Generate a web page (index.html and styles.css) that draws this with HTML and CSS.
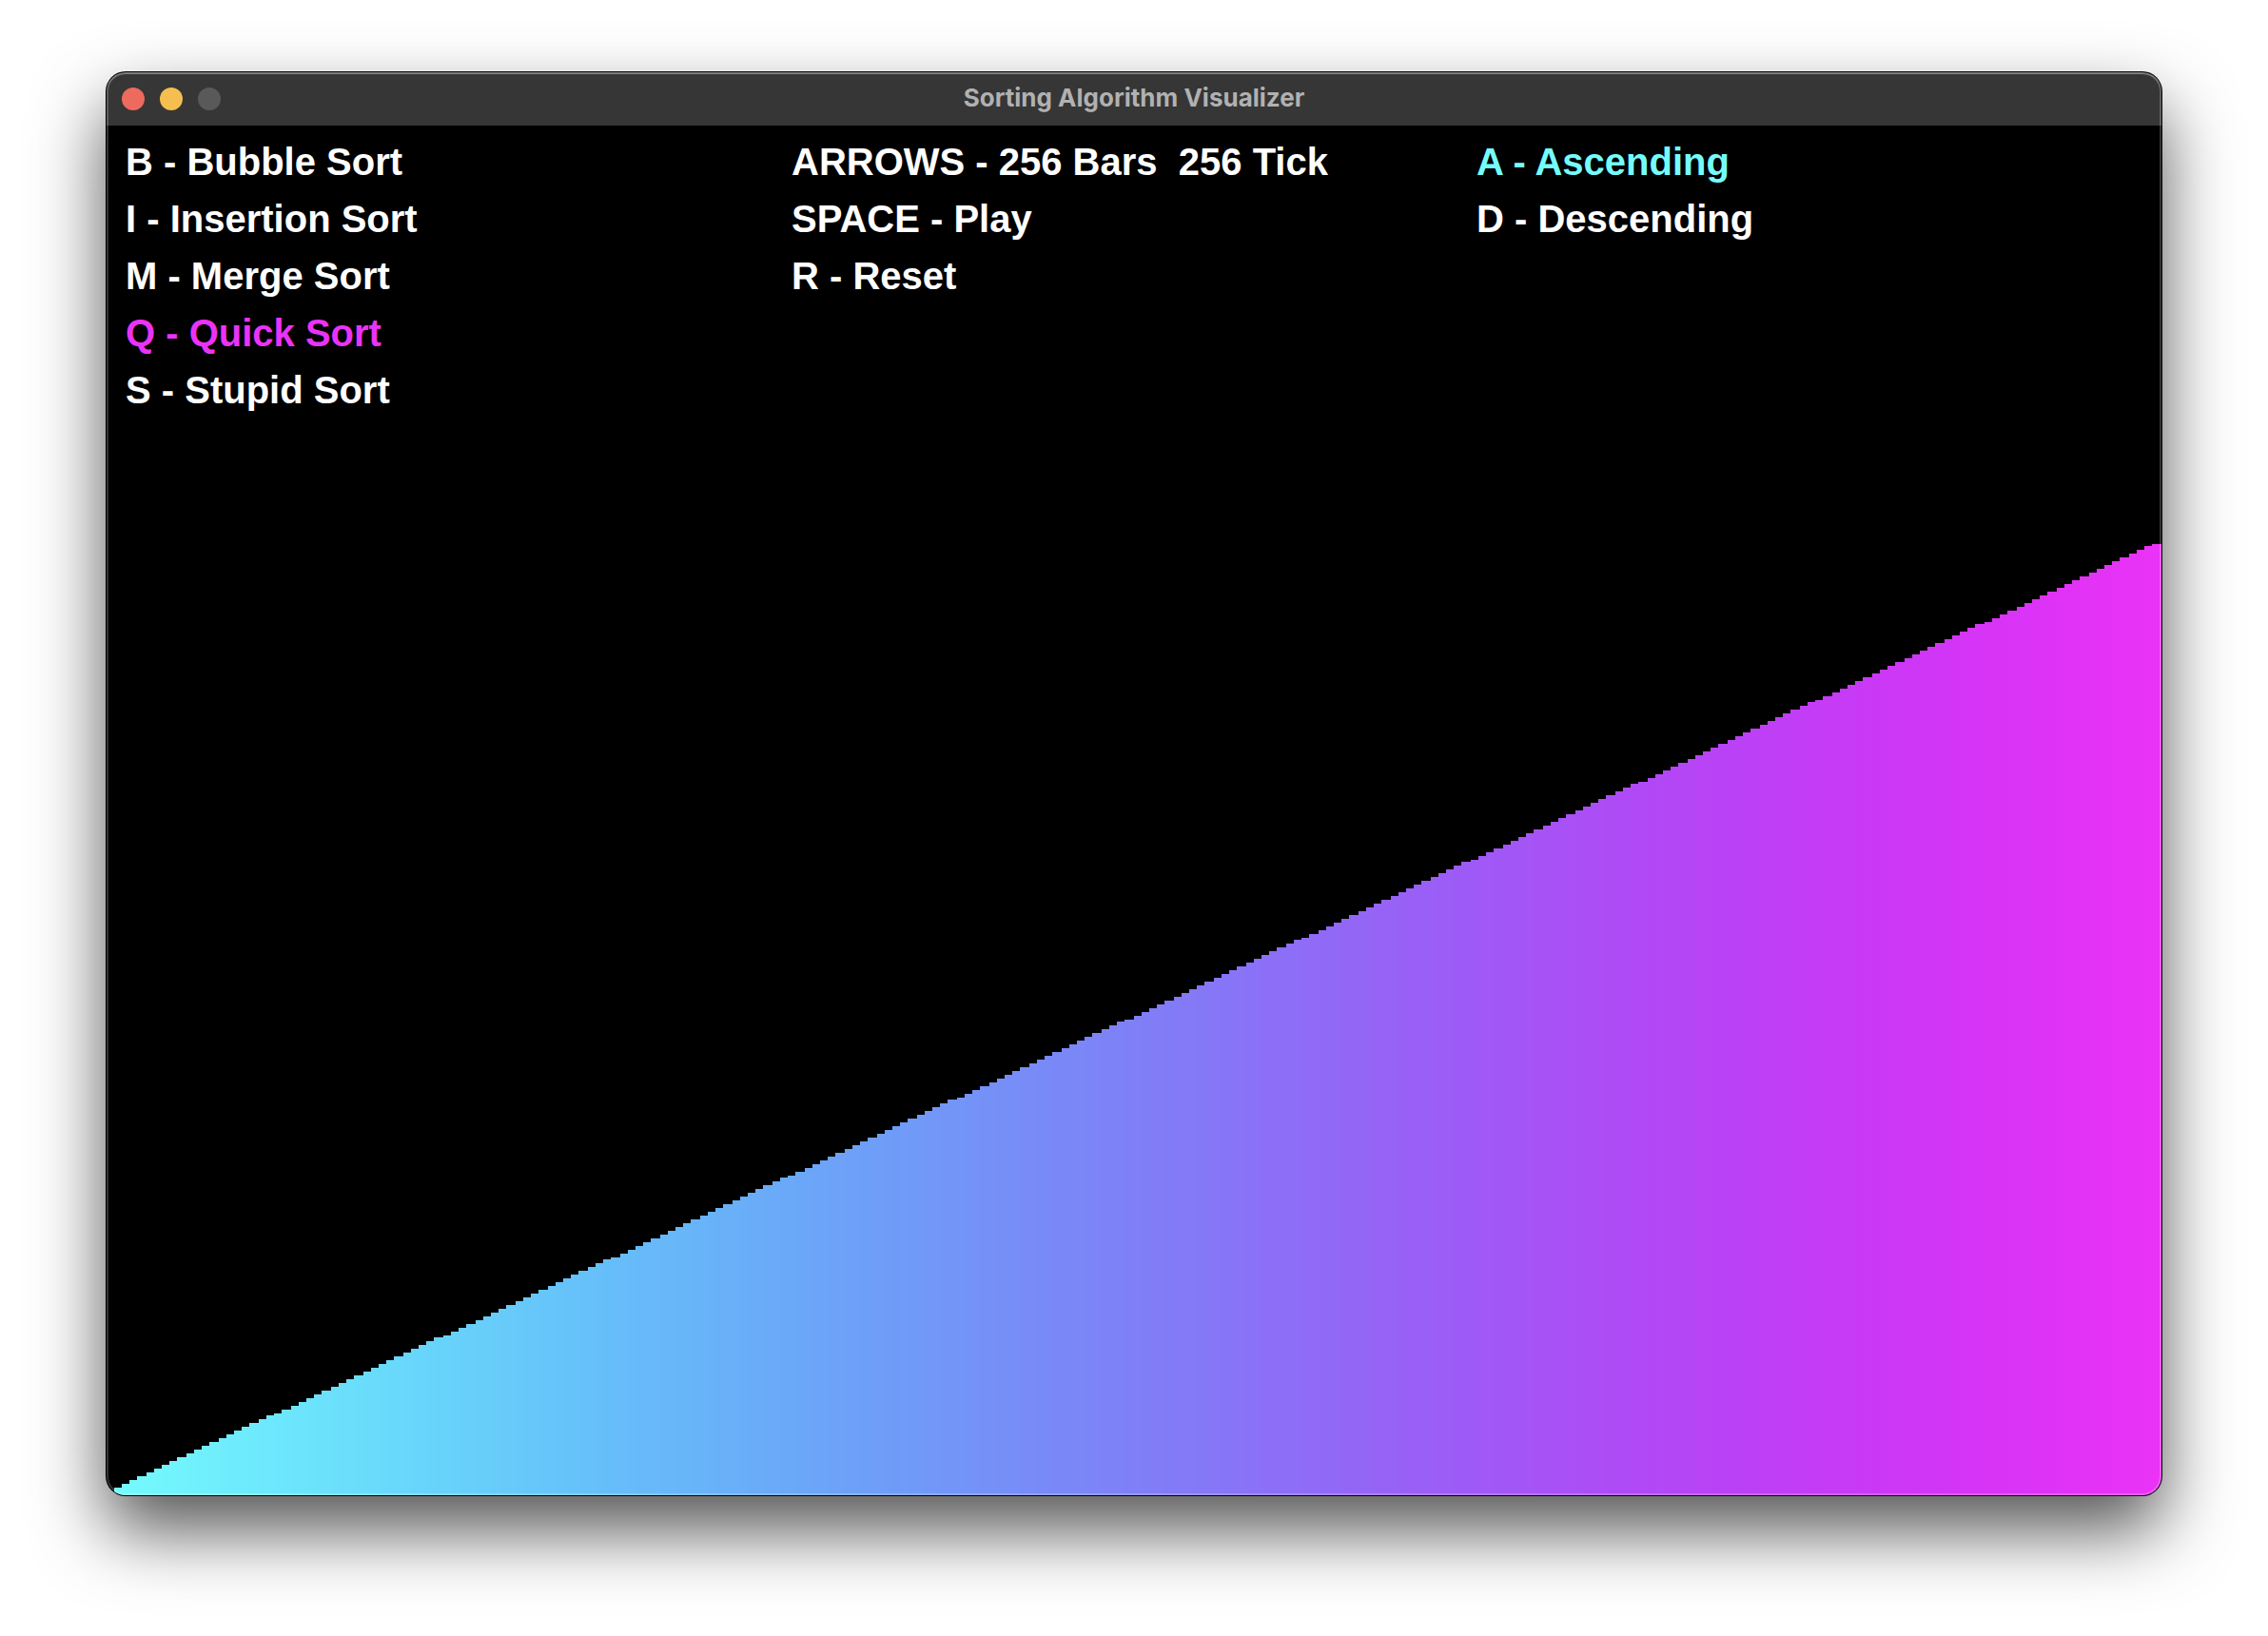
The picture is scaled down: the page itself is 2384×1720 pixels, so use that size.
FILE: index.html
```html
<!DOCTYPE html>
<html lang="en">
<head>
<meta charset="utf-8">
<meta name="viewport" content="width=device-width, initial-scale=1">
<title>Sorting Algorithm Visualizer</title>
<link rel="stylesheet" href="styles.css">
</head>
<body>
<main class="window">
  <header class="titlebar">
    <div class="lights">
      <button class="light light-close" type="button" aria-label="Close"></button>
      <button class="light light-minimize" type="button" aria-label="Minimize"></button>
      <button class="light light-zoom" type="button" aria-label="Zoom" disabled></button>
    </div>
    <h1 class="title">Sorting Algorithm Visualizer</h1>
  </header>
  <section class="stage">
    <div class="keys">
      <ul class="key-list key-list-first">
        <li>B - Bubble Sort</li>
        <li>I - Insertion Sort</li>
        <li>M - Merge Sort</li>
        <li class="algorithm-active">Q - Quick Sort</li>
        <li>S - Stupid Sort</li>
      </ul>
      <ul class="key-list">
        <li>ARROWS - 256 Bars&nbsp; 256 Tick</li>
        <li>SPACE - Play</li>
        <li>R - Reset</li>
      </ul>
      <ul class="key-list">
        <li class="order-active">A - Ascending</li>
        <li>D - Descending</li>
      </ul>
    </div>
    <svg class="bars" id="bars" viewBox="0 0 1080 500" role="img" aria-label="256 sorted bars"></svg>
  </section>
</main>
<script src="bars.js"></script>
</body>
</html>
```
FILE: styles.css
```css
* {
  box-sizing: border-box;
}

body {
  margin: 0;
  padding: 76px 112px 148px;
  background: #ffffff;
}

.window {
  position: relative;
  overflow: hidden;
  border-radius: 20px;
  background: #000000;
  box-shadow: 0 0 0 1px #000000, 0 36px 76px rgba(0, 0, 0, 0.68);
}

/* light rim drawn over the window's edge */
.window::after {
  content: "";
  position: absolute;
  inset: 0;
  border-radius: 20px;
  box-shadow: inset 0 2px 0 rgba(255, 255, 255, 0.2), inset 0 0 0 2px rgba(255, 255, 255, 0.2);
  pointer-events: none;
}

.titlebar {
  display: grid;
  grid-template-columns: 1fr auto 1fr;
  align-items: center;
  height: 56px;
  padding: 0 16px;
  background: #363636;
}

.lights {
  display: flex;
  gap: 16px;
}

.light {
  width: 24px;
  height: 24px;
  padding: 0;
  border: 0;
  border-radius: 50%;
}

.light-close {
  background: #ed6a5e;
}

.light-minimize {
  background: #f5bf4f;
}

.light-zoom {
  background: #595959;
}

.title {
  margin: 0;
  padding-bottom: 2px;
  color: #b1b1b1;
  font: 700 26px/32px Inter, "Liberation Sans", sans-serif;
}

.stage {
  display: flex;
  flex-direction: column;
  justify-content: space-between;
  aspect-ratio: 3 / 2;
}

.keys {
  display: grid;
  grid-template-columns: repeat(3, minmax(0, 1fr));
  padding-top: 8px;
}

.key-list {
  margin: 0;
  padding: 0;
  list-style: none;
  color: #ffffff;
  font: 700 40px/60px "Liberation Sans", Arial, sans-serif;
}

.key-list-first {
  padding-left: 20px;
}

.algorithm-active {
  color: #ea33f7;
}

.order-active {
  color: #75fbfd;
}

.bars {
  display: block;
  width: 100%;
  shape-rendering: crispEdges;
}
```
FILE: bars.js
```js
const COUNT = 256;
const WIDTH = 1080;
const HEIGHT = 500;

const toLinear = v => (v <= 0.04045 ? v / 12.92 : ((v + 0.055) / 1.055) ** 2.4);
const toByte = v => Math.round(255 * (v <= 0.0031308 ? v * 12.92 : 1.055 * v ** (1 / 2.4) - 0.055));

// Cyan to magenta, expressed in the wide-gamut display's own channels.
function barColor(t) {
  const r = toLinear(t);
  const g = toLinear(1 - t);
  return `rgb(${toByte(0.8225 * r + 0.1774 * g)}, ${toByte(0.0332 * r + 0.9669 * g)}, ${toByte(0.0171 * r + 0.0724 * g + 0.9108)})`;
}

const chart = document.getElementById("bars");
for (let i = 0; i < COUNT; i++) {
  const left = Math.floor(i * WIDTH / COUNT);
  const right = Math.floor((i + 1) * WIDTH / COUNT);
  const height = Math.ceil((i + 1) * HEIGHT / COUNT);
  const bar = document.createElementNS("http://www.w3.org/2000/svg", "rect");
  bar.setAttribute("x", left);
  bar.setAttribute("y", HEIGHT - height);
  bar.setAttribute("width", right - left);
  bar.setAttribute("height", height);
  bar.setAttribute("fill", barColor(i / (COUNT - 1)));
  chart.appendChild(bar);
}
```
